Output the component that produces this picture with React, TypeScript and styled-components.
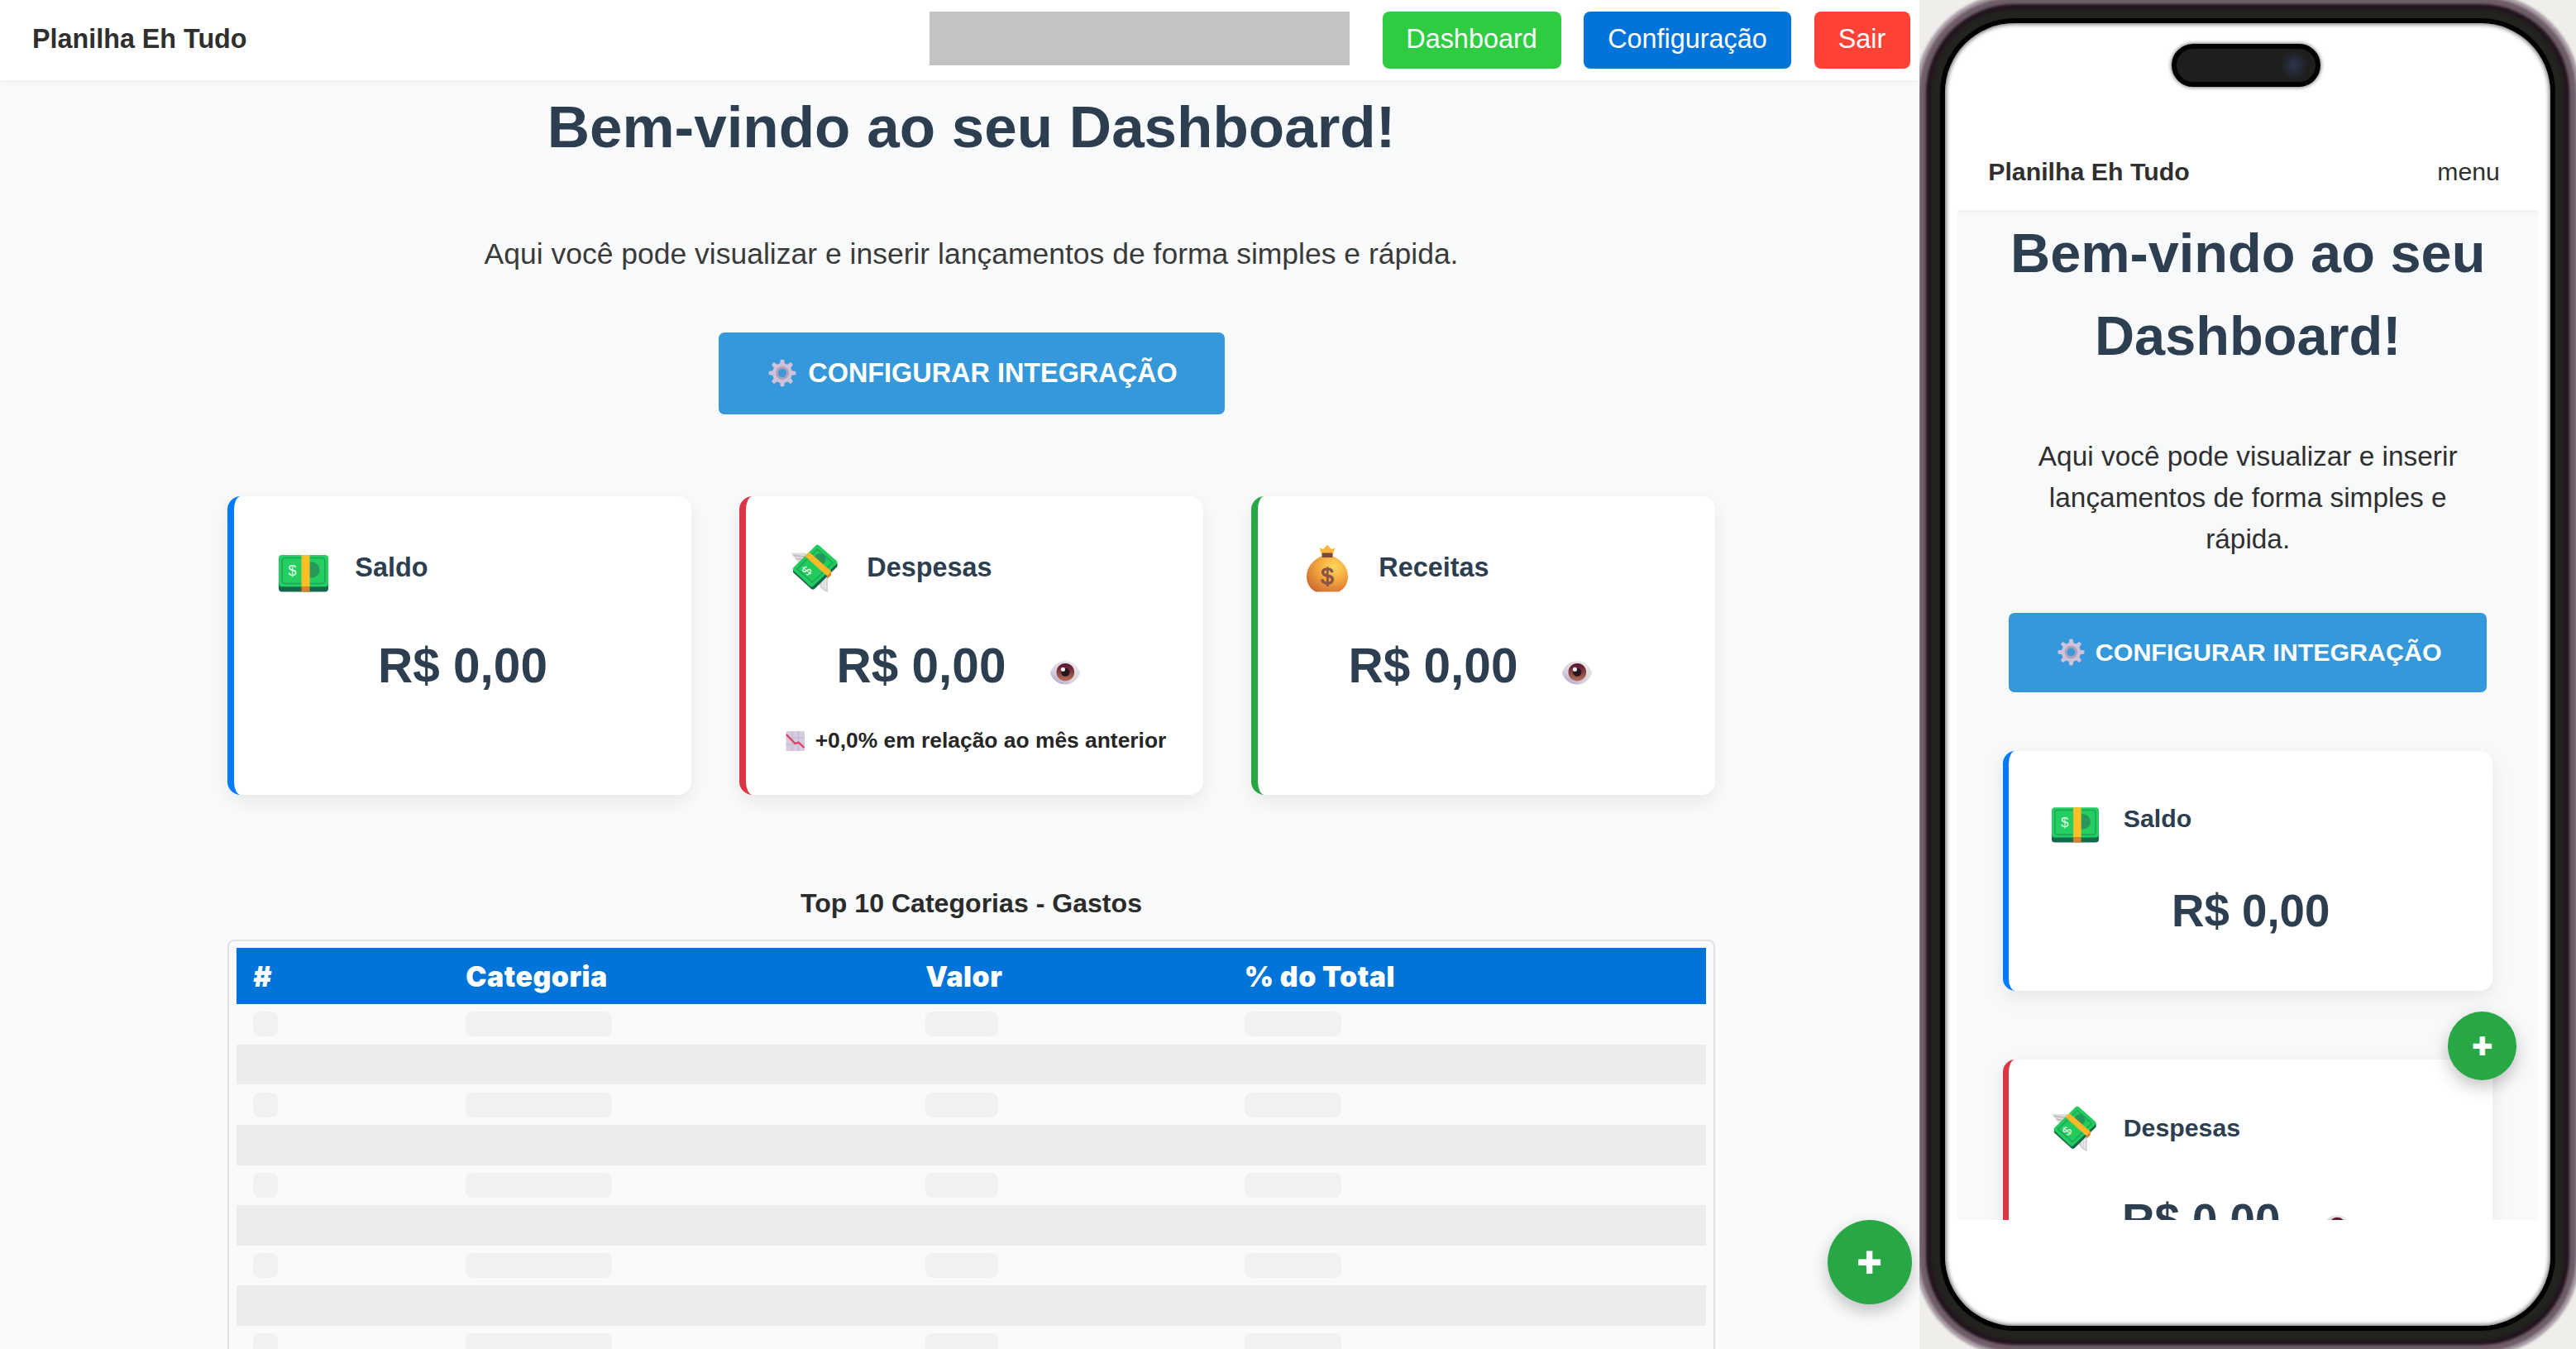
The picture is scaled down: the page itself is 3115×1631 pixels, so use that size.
import React from "react";
import styled, { createGlobalStyle, css, ThemeProvider } from "styled-components";

const GlobalStyle = createGlobalStyle`
  * { box-sizing: border-box; }
  body {
    margin: 0;
    background: #f9fafc;
    font-family: "Liberation Sans", Arial, Helvetica, sans-serif;
    color: #2f2f2f;
    overflow: hidden;
  }
  h1, h2, h3, p { margin: 0; }
  button { border: 0; font-family: inherit; }
`;

const desktop = {
  h1: { size: 71, line: 107, top: 2.5 },
  lead: { size: 35.5, line: 53, top: 74.5, pad: 0, color: "#3a3a3a" },
  cta: { size: 32.4, top: 68, width: 612, height: 99, icon: 34, gap: 14, shift: 4 },
  cards: { top: 99, gap: 58.6, height: 361, columns: "repeat(3, 1fr)" },
  card: { border: 8, radius: 16, top: 56, left: 54, icon: 60, gap: 32, title: 32.4 },
  value: { size: 58.5, line: 88, top: 45, eyeWrap: 129, eye: 36, eyeLeft: 54 },
  fab: { size: 102, font: 50 },
};

const mobile: typeof desktop = {
  h1: { size: 66.7, line: 100.4, top: 2 },
  lead: { size: 33.4, line: 50.2, top: 70, pad: 18, color: "#2f2f2f" },
  cta: { size: 30.4, top: 64, width: 578, height: 95.4, icon: 33, gap: 13, shift: 4 },
  cards: { top: 70.7, gap: 83, height: 290.5, columns: "1fr" },
  card: { border: 7, radius: 15, top: 54, left: 52, icon: 57, gap: 29.5, title: 30.3 },
  value: { size: 54.7, line: 82, top: 41.5, eyeWrap: 120, eye: 34, eyeLeft: 52 },
  fab: { size: 83, font: 41 },
};

type M = { theme: typeof desktop };
const m = (pick: (t: typeof desktop) => number) => (p: any) => `${pick((p as M).theme)}px`;

/* ---------- page shell ---------- */

const Page = styled.div`
  display: flex;
  width: 3115px;
  height: 1631px;
  overflow: hidden;
`;

const DesktopPane = styled.section`
  position: relative;
  width: 2321px;
  height: 1631px;
  overflow: hidden;
  background: #f9fafc;
`;

const TopBar = styled.header`
  display: flex;
  align-items: flex-start;
  height: 97px;
  padding: 14px 11.500px 0 39px;
  background: #fff;
  box-shadow: 0 2px 8px rgba(0, 0, 0, 0.05);
  position: relative;
`;

const Brand = styled.div<{ $size: number; $line: number }>`
  font-size: ${(p) => p.$size}px;
  line-height: ${(p) => p.$line}px;
  font-weight: 700;
  margin-right: auto;
  white-space: nowrap;
`;

const UserBadge = styled.div`
  width: 508px;
  height: 65px;
  margin-right: 40px;
  background: #c3c3c3;
`;

const NavButton = styled.button<{ $color: string; $width: number }>`
  width: ${(p) => p.$width}px;
  height: 69px;
  margin-left: 27.5px;
  padding: 0 0 2px;
  border-radius: 8px;
  background: ${(p) => p.$color};
  color: #fff;
  font-size: 32.4px;
  line-height: 67px;
  text-align: center;
  &:first-of-type { margin-left: 0; }
`;

const Content = styled.main<{ $side: number; $width: number }>`
  display: flex;
  flex-direction: column;
  align-items: center;
  width: ${(p) => p.$width}px;
  padding: 0 ${(p) => p.$side}px;
`;

const Title = styled.h1`
  margin-top: ${m((t) => t.h1.top)};
  font-size: ${m((t) => t.h1.size)};
  line-height: ${m((t) => t.h1.line)};
  color: #2c3e50;
  text-align: center;
`;

const Lead = styled.p`
  margin-top: ${m((t) => t.lead.top)};
  padding: 0 ${m((t) => t.lead.pad)};
  font-size: ${m((t) => t.lead.size)};
  line-height: ${m((t) => t.lead.line)};
  color: ${(p: any) => p.theme.lead.color};
  text-align: center;
`;

const Cta = styled.button`
  display: flex;
  align-items: center;
  justify-content: center;
  gap: ${m((t) => t.cta.gap)};
  flex: none;
  width: ${m((t) => t.cta.width)};
  height: ${m((t) => t.cta.height)};
  margin-top: ${m((t) => t.cta.top)};
  padding: 0 0 1px ${m((t) => t.cta.shift)};
  border-radius: 7px;
  background: #3498db;
  color: #fff;
  font-size: ${m((t) => t.cta.size)};
  font-weight: 700;
  white-space: nowrap;
  svg { width: ${m((t) => t.cta.icon)}; height: ${m((t) => t.cta.icon)}; }
`;

/* ---------- cards ---------- */

const Cards = styled.div`
  display: grid;
  grid-template-columns: ${(p: any) => p.theme.cards.columns};
  grid-auto-rows: ${m((t) => t.cards.height)};
  gap: ${m((t) => t.cards.gap)};
  width: 100%;
  margin-top: ${m((t) => t.cards.top)};
`;

const CardBox = styled.article<{ $accent: string }>`
  display: flex;
  flex-direction: column;
  padding-top: ${m((t) => t.card.top)};
  background: #fff;
  border-left: ${m((t) => t.card.border)} solid ${(p) => p.$accent};
  border-radius: ${m((t) => t.card.radius)};
  box-shadow: 0 8px 24px rgba(0, 0, 0, 0.08);
`;

const CardHead = styled.div`
  display: flex;
  align-items: center;
  gap: ${m((t) => t.card.gap)};
  height: ${m((t) => t.card.icon)};
  padding-left: ${m((t) => t.card.left)};
  svg { width: ${m((t) => t.card.icon)}; height: ${m((t) => t.card.icon)}; flex: none; }
`;

const CardTitle = styled.h3`
  font-size: ${m((t) => t.card.title)};
  font-weight: 700;
  color: #2c3e50;
`;

const ValueRow = styled.div`
  display: flex;
  align-items: center;
  justify-content: center;
  height: ${m((t) => t.value.line)};
  margin-top: ${m((t) => t.value.top)};
`;

const Value = styled.span`
  font-size: ${m((t) => t.value.size)};
  line-height: ${m((t) => t.value.line)};
  font-weight: 700;
  color: #2c3e50;
  white-space: nowrap;
`;

const EyeToggle = styled.button`
  display: flex;
  width: ${m((t) => t.value.eyeWrap)};
  padding: 17px 0 0 ${m((t) => t.value.eyeLeft)};
  background: none;
  svg { width: ${m((t) => t.value.eye)}; height: auto; flex: none; }
`;

const Trend = styled.div`
  display: flex;
  align-items: center;
  justify-content: center;
  gap: 12px;
  margin-top: 26px;
  height: 40px;
  padding-left: 3px;
  font-size: 26.4px;
  font-weight: 700;
  color: #262626;
  white-space: nowrap;
  svg { width: 24px; height: 24px; flex: none; margin-top: 2px; }
`;

/* ---------- table ---------- */

const TableTitle = styled.h3`
  margin-top: 106.5px;
  font-size: 32.1px;
  line-height: 48px;
  font-weight: 700;
  color: #2b2b2b;
`;

const TableFrame = styled.div`
  width: 100%;
  margin-top: 20px;
  padding: 8.500px 9px;
  border: 2px solid #dfe1e3;
  border-radius: 8px;
`;

const gridRow = css`
  display: grid;
  grid-template-columns: 257px 556px 385.5px 1fr;
  align-items: center;
  > * { margin-left: 20px; }
`;

const HeadRow = styled.div`
  ${gridRow}
  height: 68px;
  background: #0074d9;
`;

const HeadCell = styled.span`
  font-family: "Arial Black", Inter, "Liberation Sans", sans-serif;
  font-weight: 900;
  font-size: 33.8px;
  letter-spacing: 0.5px;
  line-height: 67px;
  color: #fff;
`;

const BodyRow = styled.div<{ $striped: boolean }>`
  ${gridRow}
  height: 48.65px;
  background: ${(p) => (p.$striped ? "#ebecee" : "transparent")};
`;

const Skeleton = styled.span<{ $width: number; $striped: boolean }>`
  width: ${(p) => p.$width}px;
  height: 30px;
  border-radius: 8px;
  background: ${(p) => (p.$striped ? "#ececec" : "#f0f2f2")};
`;

const Fab = styled.button<{ $right: number; $top: number }>`
  position: absolute;
  right: ${(p) => p.$right}px;
  top: ${(p) => p.$top}px;
  width: ${m((t) => t.fab.size)};
  height: ${m((t) => t.fab.size)};
  padding: 0;
  border-radius: 50%;
  background: #28a745;
  box-shadow: 0 8px 20px rgba(0, 0, 0, 0.24);
  color: #fff;
  display: flex;
  align-items: center;
  justify-content: center;
  font-size: ${m((t) => t.fab.font)};
  line-height: 1;
  font-weight: 700;
  -webkit-text-stroke: 1.8px #fff;
`;

/* ---------- phone ---------- */

const PhonePane = styled.section`
  position: relative;
  width: 794px;
  height: 1631px;
  padding: 28px 31px;
  overflow: hidden;
  background: #efeeeb;
`;

const Screen = styled.div`
  position: relative;
  height: 1575px;
  padding: 133px 15.2px 0;
  border-radius: 84px;
  background: #fff;
  box-shadow: inset 0 0 5px 1.5px rgba(0, 0, 0, 0.55), 0 0 0 6px #020202, 0 0 3px 17px #22221f,
    0 0 3px 23px #23161f, 0 0 3px 31px #6f5d6a, 0 0 3px 36px #a99da7;
`;

const Island = styled.div`
  position: absolute;
  top: 25px;
  left: 274px;
  width: 180px;
  height: 52px;
  border: 6px solid #020202;
  border-radius: 26px;
  background: radial-gradient(ellipse 16px 18px at 142px 20px, #2b3850 0%, #1e1e1d 100%);
  box-shadow: 0 0 4px 1px rgba(0, 0, 0, 0.5);
`;

const MobileApp = styled.div`
  position: relative;
  height: 1314px;
  overflow: hidden;
  background: #f8f9fb;
`;

const MobileBar = styled.header`
  position: relative;
  display: flex;
  height: 93px;
  padding: 0 46px 0 37px;
  background: #fff;
  box-shadow: 0 2px 6px rgba(0, 0, 0, 0.05);
`;

const MenuLink = styled.span`
  font-size: 30.2px;
  line-height: 93px;
`;

/* ---------- icons ---------- */

const Gear = () => (
  <svg viewBox="0 0 32 32">
    <g fill="#cfc3dc">
      {[0, 45, 90, 135, 180, 225, 270, 315].map((a) => (
        <path key={a} d="M13 8l.8-6.400C13.900 1 14.300.600 14.900.600h2.200c.600 0 1 .4 1.100 1L19 8z" transform={`rotate(${a} 16 16)`} />
      ))}
    </g>
    <circle cx="16" cy="16" r="8" fill="none" stroke="#cdc2d8" strokeWidth="6.500" />
    <circle cx="16" cy="16" r="6.300" fill="none" stroke="#b09fbb" strokeWidth="2.400" />
    <circle cx="16" cy="16" r="4.900" fill="#3f97d6" />
  </svg>
);

const Cash = () => (
  <svg viewBox="0 0 60 60">
    <rect x="0" y="20" width="60" height="39.5" rx="4" fill="#13694a" />
    <rect x="0" y="20" width="60" height="34" rx="4" fill="#178b53" />
    <rect x="0" y="15" width="60" height="38" rx="4" fill="#22cf60" />
    <rect x="4.2" y="18.5" width="51.6" height="31" rx="3.5" fill="none" stroke="#1ba556" strokeWidth="1.5" />
    <path d="M37.500 23.800a9.500 9.500 0 1 1 0 18.400z" fill="#27985a" />
    <rect x="27.5" y="15" width="10" height="38" fill="#fdbe28" />
    <rect x="27.5" y="53" width="10" height="6.5" fill="#d9822e" />
    <text x="16.5" y="39.6" fontSize="18" textAnchor="middle" fill="#e6f7e9" fontFamily="Liberation Sans, sans-serif">$</text>
  </svg>
);

const FlyingCash = () => (
  <svg viewBox="0 0 60 60">
    <path d="M0.500 12.500H19l6 6-12 14C12 25 5 20 .500 12.500z" fill="#dedbdc" />
    <path d="M3 15.500l14 1.500M6 19.500l10 1" stroke="#bdb9bd" strokeWidth="1.400" />
    <path d="M33 49l7-13 5 1.500V60c-5-1-9-6-12-11z" fill="#d6d2d4" />
    <path d="M39 43v11M42 42v14" stroke="#f0eeee" strokeWidth="1.400" />
    <path d="M3 33L34 5l22.500 20v4L29 56q-2 1.500-4 0L3 36z" fill="#126748" />
    <path d="M3.600 30L30.500 3.500q2-1.800 4 0L55.500 22q2 2 0 4L27.500 52.500q-2 1.800-4 0L3.600 34q-2-2 0-4z" fill="#22cb5e" />
    <path d="M8 31.800L32.500 8l18.500 16.500L26.500 48z" fill="none" stroke="#1ba556" strokeWidth="1.400" />
    <circle cx="35.500" cy="20" r="7" fill="#27985a" />
    <path d="M17.500 16.500l5-4.900 26.500 23v4.200l-5 1.500z" fill="#fdb927" />
    <path d="M44 40.300l5-4.700v4l-4.500 4.200z" fill="#d9822e" />
    <text x="19.500" y="39.500" fontSize="16" textAnchor="middle" fill="#e6f7e9" transform="rotate(-50 19.500 34)" fontFamily="Liberation Sans, sans-serif">$</text>
  </svg>
);

const MoneyBag = () => (
  <svg viewBox="0 0 60 60">
    <defs>
      <radialGradient id="bag" cx="0.66" cy="0.3" r="0.8">
        <stop offset="0" stopColor="#ffd75c" />
        <stop offset="0.5" stopColor="#f3a63c" />
        <stop offset="1" stopColor="#d06a33" />
      </radialGradient>
    </defs>
    <path d="M20.500 6.500l4.500 1.500 4-4.500q1-1.200 2 0L35 8l4.500-1.500L36.500 15h-13z" fill="#fdb640" />
    <path d="M24 16h12c10 4 19 13 19 25 0 8-4 15-11 18.500H16C9 56 5 49 5 41c0-12 9-21 19-25z" fill="url(#bag)" />
    <rect x="23.500" y="12.500" width="13" height="5.600" rx="1" fill="#7c4a3c" />
    <text x="30" y="50" fontSize="28" textAnchor="middle" fill="#8a5348" stroke="#8a5348" strokeWidth="1" fontFamily="Liberation Sans, sans-serif">$</text>
  </svg>
);

const Eye = () => (
  <svg viewBox="0 0 35 28">
    <defs>
      <linearGradient id="sclera" x1="0" y1="1" x2="0.700" y2="0">
        <stop offset="0" stopColor="#a594c0" />
        <stop offset="0.400" stopColor="#d6cfdd" />
        <stop offset="1" stopColor="#e9e7e9" />
      </linearGradient>
      <linearGradient id="iris" x1="0" y1="0" x2="0" y2="1">
        <stop offset="0.150" stopColor="#641a36" />
        <stop offset="0.600" stopColor="#8f4a42" />
        <stop offset="1" stopColor="#b4705c" />
      </linearGradient>
    </defs>
    <path d="M0.300 12.500C4 4.500 10 .300 17.500.300S31 4.500 34.700 12.500q.6 1.500 0 3C31 23.500 25 27.700 17.500 27.700S4 23.500.300 15.500q-.6-1.500 0-3z" fill="url(#sclera)" />
    <circle cx="17.800" cy="13.300" r="10.500" fill="url(#iris)" />
    <circle cx="17.800" cy="13.300" r="5" fill="#26141f" />
    <circle cx="15" cy="10" r="2.500" fill="#f3eef0" />
  </svg>
);

const ChartDown = () => (
  <svg viewBox="0 0 24 24">
    <rect x="0.500" width="22.500" height="24" rx="1.500" fill="#d5ccdf" />
    <path d="M8 0v24M15.500 0v24M0.500 8h22.500M0.500 16h22.500" stroke="#bfb3cb" strokeWidth="0.900" />
    <path d="M0.800 4L11.500 15l4-1.500L22.500 20" fill="none" stroke="#e23a62" strokeWidth="2.200" />
  </svg>
);

/* ---------- composition ---------- */

type CardProps = { title: string; accent: string; icon: React.ReactNode; eye?: boolean; trend?: boolean };

const Card = ({ title, accent, icon, eye, trend }: CardProps) => (
  <CardBox $accent={accent}>
    <CardHead>
      {icon}
      <CardTitle>{title}</CardTitle>
    </CardHead>
    <ValueRow>
      <Value>R$ 0,00</Value>
      {eye && (
        <EyeToggle>
          <Eye />
        </EyeToggle>
      )}
    </ValueRow>
    {trend && (
      <Trend>
        <ChartDown />
        +0,0% em relação ao mês anterior
      </Trend>
    )}
  </CardBox>
);

const Hero = () => (
  <>
    <Title>Bem-vindo ao seu Dashboard!</Title>
    <Lead>Aqui você pode visualizar e inserir lançamentos de forma simples e rápida.</Lead>
    <Cta>
      <Gear />
      CONFIGURAR INTEGRAÇÃO
    </Cta>
  </>
);

const columns = ["#", "Categoria", "Valor", "% do Total"];
const skeletonWidths = [29.5, 176.5, 88, 117];

export default function App() {
  return (
    <Page>
      <GlobalStyle />
      <ThemeProvider theme={desktop}>
        <DesktopPane>
          <TopBar>
            <Brand $size={32.3} $line={67}>Planilha Eh Tudo</Brand>
            <UserBadge />
            <NavButton $color="#2ecc40" $width={216}>Dashboard</NavButton>
            <NavButton $color="#0074d9" $width={251}>Configuração</NavButton>
            <NavButton $color="#ff4136" $width={116}>Sair</NavButton>
          </TopBar>
          <Content $side={275.3} $width={2349}>
            <Hero />
            <Cards>
              <Card title="Saldo" accent="#007bff" icon={<Cash />} />
              <Card title="Despesas" accent="#dc3545" icon={<FlyingCash />} eye trend />
              <Card title="Receitas" accent="#28a745" icon={<MoneyBag />} eye />
            </Cards>
            <TableTitle>Top 10 Categorias - Gastos</TableTitle>
            <TableFrame>
              <HeadRow>
                {columns.map((c) => (
                  <HeadCell key={c}>{c}</HeadCell>
                ))}
              </HeadRow>
              {Array.from({ length: 10 }, (_, i) => (
                <BodyRow key={i} $striped={i % 2 === 1}>
                  {skeletonWidths.map((w) => (
                    <Skeleton key={w} $width={w} $striped={i % 2 === 1} />
                  ))}
                </BodyRow>
              ))}
            </TableFrame>
          </Content>
          <Fab $right={9.5} $top={1475}>+</Fab>
        </DesktopPane>
      </ThemeProvider>
      <ThemeProvider theme={mobile}>
        <PhonePane>
          <Screen>
            <Island />
            <MobileApp>
              <MobileBar>
                <Brand $size={30.3} $line={93}>Planilha Eh Tudo</Brand>
                <MenuLink>menu</MenuLink>
              </MobileBar>
              <Content $side={55} $width={702}>
                <Hero />
                <Cards>
                  <Card title="Saldo" accent="#007bff" icon={<Cash />} />
                  <Card title="Despesas" accent="#dc3545" icon={<FlyingCash />} eye />
                </Cards>
              </Content>
              <Fab $right={25.5} $top={1061.5}>+</Fab>
            </MobileApp>
          </Screen>
        </PhonePane>
      </ThemeProvider>
    </Page>
  );
}
